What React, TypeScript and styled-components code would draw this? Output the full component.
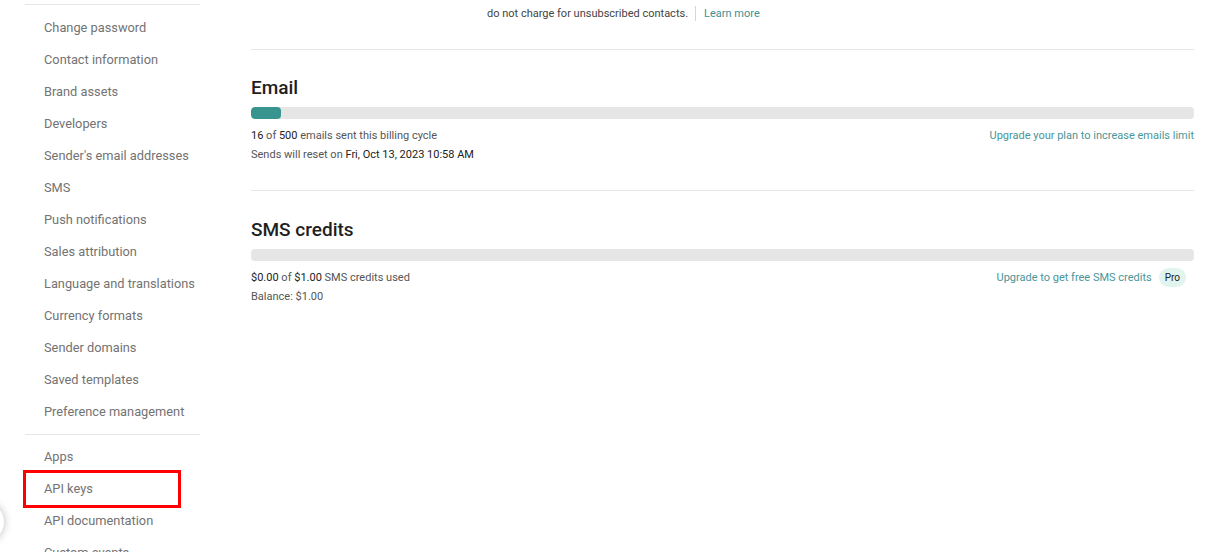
import styled, { createGlobalStyle } from "styled-components";

const GlobalStyle = createGlobalStyle`
  body {
    margin: 0;
    background: #ffffff;
    font-family: Roboto, "Liberation Sans", Arial, sans-serif;
    overflow: hidden;
  }
`;

const Page = styled.div`
  display: grid;
  grid-template-columns: 226px 1fr;
  height: 552px;
  position: relative;
  overflow: hidden;
`;

const Sidebar = styled.nav`
  display: flex;
  flex-direction: column;
  padding-left: 25px;
  width: 175px;
`;

const SideDivider = styled.hr<{ $top: number; $bottom: number }>`
  border: none;
  border-top: 1px solid #e6e6e6;
  margin: ${(p) => p.$top}px 0 ${(p) => p.$bottom}px;
  width: 175px;
`;

const NavItem = styled.a<{ $marked?: boolean }>`
  display: block;
  height: 32px;
  line-height: 32px;
  padding-left: 18px;
  width: 134px;
  margin-left: 1px;
  font-size: 12.8px;
  color: #737373;
  text-decoration: none;
  white-space: nowrap;
  outline: ${(p) => (p.$marked ? "3px solid #ff0000" : "none")};
`;

const FloatShadow = styled.div`
  position: absolute;
  left: -36px;
  top: 502px;
  width: 40px;
  height: 40px;
  border-radius: 50%;
  background: #fff;
  box-shadow: 0 0 8px rgba(0, 0, 0, 0.28);
`;

const Main = styled.main`
  padding: 0 15px 0 25px;
  display: flex;
  flex-direction: column;
`;

const Notice = styled.div`
  display: flex;
  align-items: center;
  height: 26px;
  padding-left: 236px;
  font-size: 11px;
  color: #444;
`;

const NoticeSep = styled.span`
  width: 1px;
  height: 15px;
  background: #d6d6d6;
  margin: 0 8px 0 7px;
`;

const Link = styled.a`
  color: #3f8f96;
  text-decoration: none;
`;

const Divider = styled.hr<{ $top: number }>`
  border: none;
  border-top: 1px solid #e6e6e6;
  margin: ${(p) => p.$top}px 0 0;
`;

const Section = styled.section<{ $pad: number }>`
  padding-top: ${(p) => p.$pad}px;
`;

const Heading = styled.h2`
  margin: 0;
  font-size: 19px;
  line-height: 24px;
  font-weight: 500;
  color: #1f1f1f;
`;

const Bar = styled.div`
  margin-top: 7px;
  height: 12px;
  border-radius: 4px;
  background: #e6e6e6;
  overflow: hidden;
`;

const Fill = styled.div`
  height: 100%;
  background: #37948e;
  border-radius: 4px;
`;

const Rows = styled.div`
  margin-top: 7px;
  font-size: 11px;
  line-height: 19px;
  color: #555;
`;

const Row = styled.div`
  display: flex;
  justify-content: space-between;
  align-items: center;
`;

const Strong = styled.span`
  color: #222;
`;

const RightLink = styled.span`
  display: flex;
  align-items: center;
  gap: 7px;
  color: #4a9599;
`;

const Pill = styled.span`
  display: inline-block;
  margin-right: 8px;
  padding: 0 6px;
  height: 19px;
  line-height: 19px;
  border-radius: 10px;
  background: #e2f4ee;
  color: #222;
  font-size: 10px;
`;

const settings = [
  "Change password",
  "Contact information",
  "Brand assets",
  "Developers",
  "Sender's email addresses",
  "SMS",
  "Push notifications",
  "Sales attribution",
  "Language and translations",
  "Currency formats",
  "Sender domains",
  "Saved templates",
  "Preference management",
];

const devLinks = ["Apps", "API keys", "API documentation", "Custom events"];

export default function App() {
  const sent = 16;
  const limit = 500;
  return (
    <>
      <GlobalStyle />
      <Page>
        <FloatShadow />
        <Sidebar>
          <SideDivider $top={4} $bottom={7} />
          {settings.map((s) => (
            <NavItem key={s} href="#">
              {s}
            </NavItem>
          ))}
          <SideDivider $top={6} $bottom={6} />
          {devLinks.map((s) => (
            <NavItem key={s} href="#" $marked={s === "API keys"}>
              {s}
            </NavItem>
          ))}
        </Sidebar>
        <Main>
          <Notice>
            do not charge for unsubscribed contacts.
            <NoticeSep />
            <Link href="#">Learn more</Link>
          </Notice>
          <Divider $top={23} />
          <Section $pad={26}>
            <Heading>Email</Heading>
            <Bar>
              <Fill style={{ width: `${Math.max((sent / limit) * 100, 3.2)}%` }} />
            </Bar>
            <Rows>
              <Row>
                <span>
                  <Strong>{sent}</Strong> of <Strong>{limit}</Strong> emails sent this billing cycle
                </span>
                <RightLink>Upgrade your plan to increase emails limit</RightLink>
              </Row>
              <Row>
                <span>
                  Sends will reset on <Strong>Fri, Oct 13, 2023 10:58 AM</Strong>
                </span>
              </Row>
            </Rows>
          </Section>
          <Divider $top={26} />
          <Section $pad={27}>
            <Heading>SMS credits</Heading>
            <Bar />
            <Rows>
              <Row>
                <span>
                  <Strong>$0.00</Strong> of <Strong>$1.00</Strong> SMS credits used
                </span>
                <RightLink>
                  Upgrade to get free SMS credits
                  <Pill>Pro</Pill>
                </RightLink>
              </Row>
              <Row>
                <span>Balance: $1.00</span>
              </Row>
            </Rows>
          </Section>
        </Main>
      </Page>
    </>
  );
}
